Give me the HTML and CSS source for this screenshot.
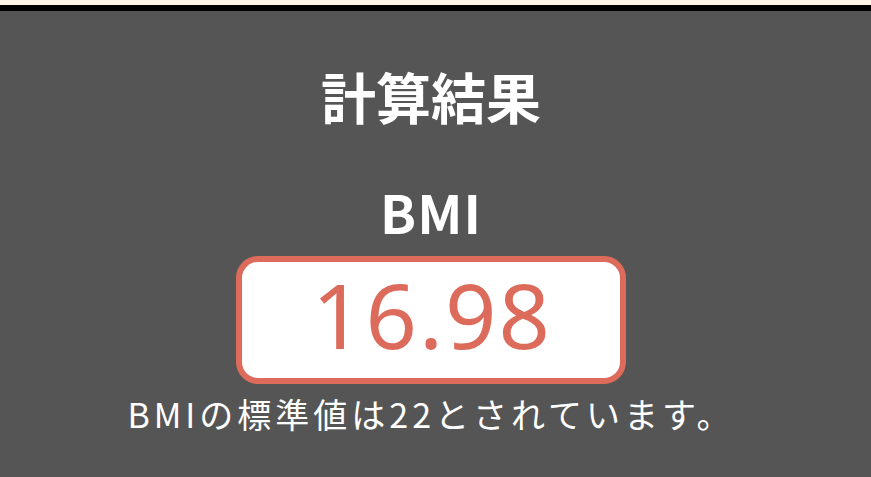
FILE: index.html
```html
<!DOCTYPE html>
<html lang="ja">
<head>
<meta charset="utf-8">
<title>計算結果</title>
<link rel="stylesheet" href="styles.css">
</head>
<body>
<div class="topbar"></div>
<main class="result">
  <h1 class="title">計算結果</h1>
  <h2 class="label">BMI</h2>
  <div class="value-box"><span class="value">16.98</span></div>
  <p class="note">BMIの標準値は22とされています。</p>
</main>
</body>
</html>
```
FILE: styles.css
```css
html, body {
  margin: 0;
  padding: 0;
}
body {
  background: #555555;
  font-family: "Noto Sans CJK JP", "Noto Sans", sans-serif;
  color: #ffffff;
  height: 477px;
  overflow: hidden;
}
.topbar {
  height: 6px;
  background: #000000;
  border-top: 5px solid #fdf3e6;
}
.result {
  display: flex;
  flex-direction: column;
  align-items: center;
  padding-right: 9px;
}
.title {
  margin: 57px 0 0;
  font-size: 55px;
  line-height: 55px;
  font-weight: 700;
}
.label {
  margin: 62px 0 0;
  font-size: 53px;
  line-height: 53px;
  font-weight: 700;
  letter-spacing: 1px;
}
.value-box {
  margin-top: 18px;
  box-sizing: border-box;
  width: 390px;
  height: 128px;
  padding-bottom: 12px;
  border: 6px solid #dd6b5b;
  border-radius: 22px;
  background: #ffffff;
  display: flex;
  align-items: center;
  justify-content: center;
}
.value {
  font-family: "Noto Sans", sans-serif;
  font-size: 90px;
  line-height: 1;
  color: #dd6b5b;
  font-weight: 400;
  letter-spacing: 2px;
  margin-right: -2px;
}
.note {
  margin: 13px 0 0;
  font-size: 34px;
  line-height: 34px;
  font-weight: 400;
  letter-spacing: 4px;
}
```
